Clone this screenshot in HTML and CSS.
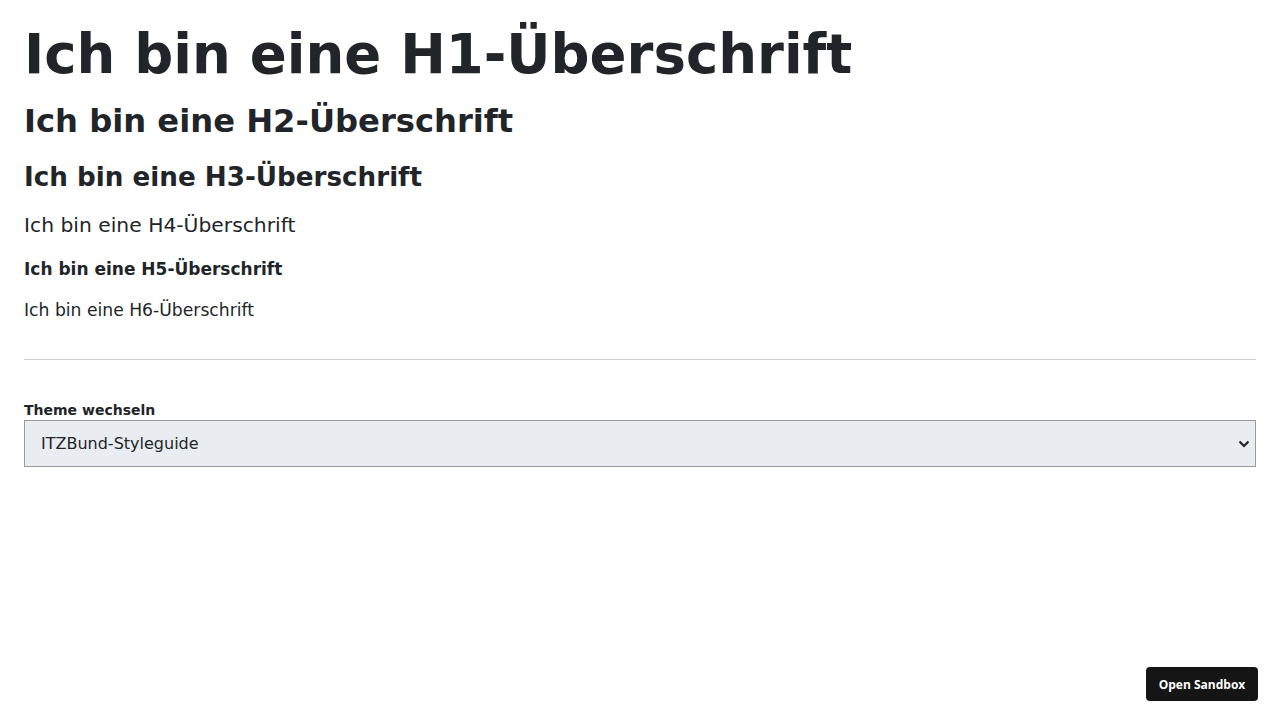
FILE: index.html
```html
<!DOCTYPE html>
<html lang="de">
<head>
<meta charset="utf-8">
<title>Überschriften</title>
<link rel="stylesheet" href="styles.css">
</head>
<body>
<main class="page">
  <h1 class="h1">Ich bin eine H1-Überschrift</h1>
  <h2 class="h2">Ich bin eine H2-Überschrift</h2>
  <h3 class="h3">Ich bin eine H3-Überschrift</h3>
  <h4 class="h4">Ich bin eine H4-Überschrift</h4>
  <h5 class="h5">Ich bin eine H5-Überschrift</h5>
  <h6 class="h6">Ich bin eine H6-Überschrift</h6>
  <hr class="divider">
  <div class="field">
    <label class="field-label" for="theme">Theme wechseln</label>
    <div class="select-wrap">
      <select id="theme" class="select">
        <option>ITZBund-Styleguide</option>
      </select>
      <svg class="select-arrow" width="12" height="8" viewBox="0 0 12 8"><path d="M1.5 1.5 L6 6 L10.5 1.5" fill="none" stroke="#212529" stroke-width="2.2"/></svg>
    </div>
  </div>
</main>
<button class="sandbox-btn">Open Sandbox</button>
</body>
</html>
```
FILE: styles.css
```css
html, body { margin: 0; padding: 0; background: #fff; }
body { font-family: "DejaVu Sans", Verdana, sans-serif; color: #212529; }
.page { padding: 24px; }
.h1, .h2, .h3 { font-family: "DejaVu Sans", Verdana, sans-serif; font-weight: 700; margin: 0; }
.h1 { font-size: 54.5px; line-height: 60px; margin-top: 0; margin-bottom: 17px; }
.h2 { font-size: 32.2px; line-height: 40px; margin-bottom: 20px; }
.h3 { font-size: 26.2px; line-height: 32px; margin-bottom: 18px; }
.h4 { font-size: 20.3px; font-weight: 400; line-height: 28px; margin: 0 0 18px; }
.h5 { font-size: 17px; font-weight: 700; line-height: 24px; margin: 0 0 17px; }
.h6 { font-size: 17.2px; font-weight: 400; line-height: 24px; margin: 0; }
.divider { border: 0; border-top: 1px solid #ccc; margin: 37px 0 41px; }
.field { display: flex; flex-direction: column; }
.field-label { font-size: 14px; font-weight: 700; line-height: 18px; margin-bottom: 1px; }
.select-wrap { position: relative; }
.select { width: 100%; height: 47px; appearance: none; -webkit-appearance: none; background: #e9edf1; border: 1px solid #9a9a9a; border-radius: 0; font-family: "DejaVu Sans", sans-serif; font-size: 16px; color: #212529; padding: 0 16px; margin: 0; }
.select-arrow { position: absolute; right: 6px; top: 20px; }
.sandbox-btn { position: fixed; right: 22px; bottom: 19px; background: #151515; color: #fff; border: 0; border-radius: 4px; font-family: "Open Sans", sans-serif; font-weight: 700; font-size: 12px; padding: 0 12px; height: 34px; width: 112px; }
```
